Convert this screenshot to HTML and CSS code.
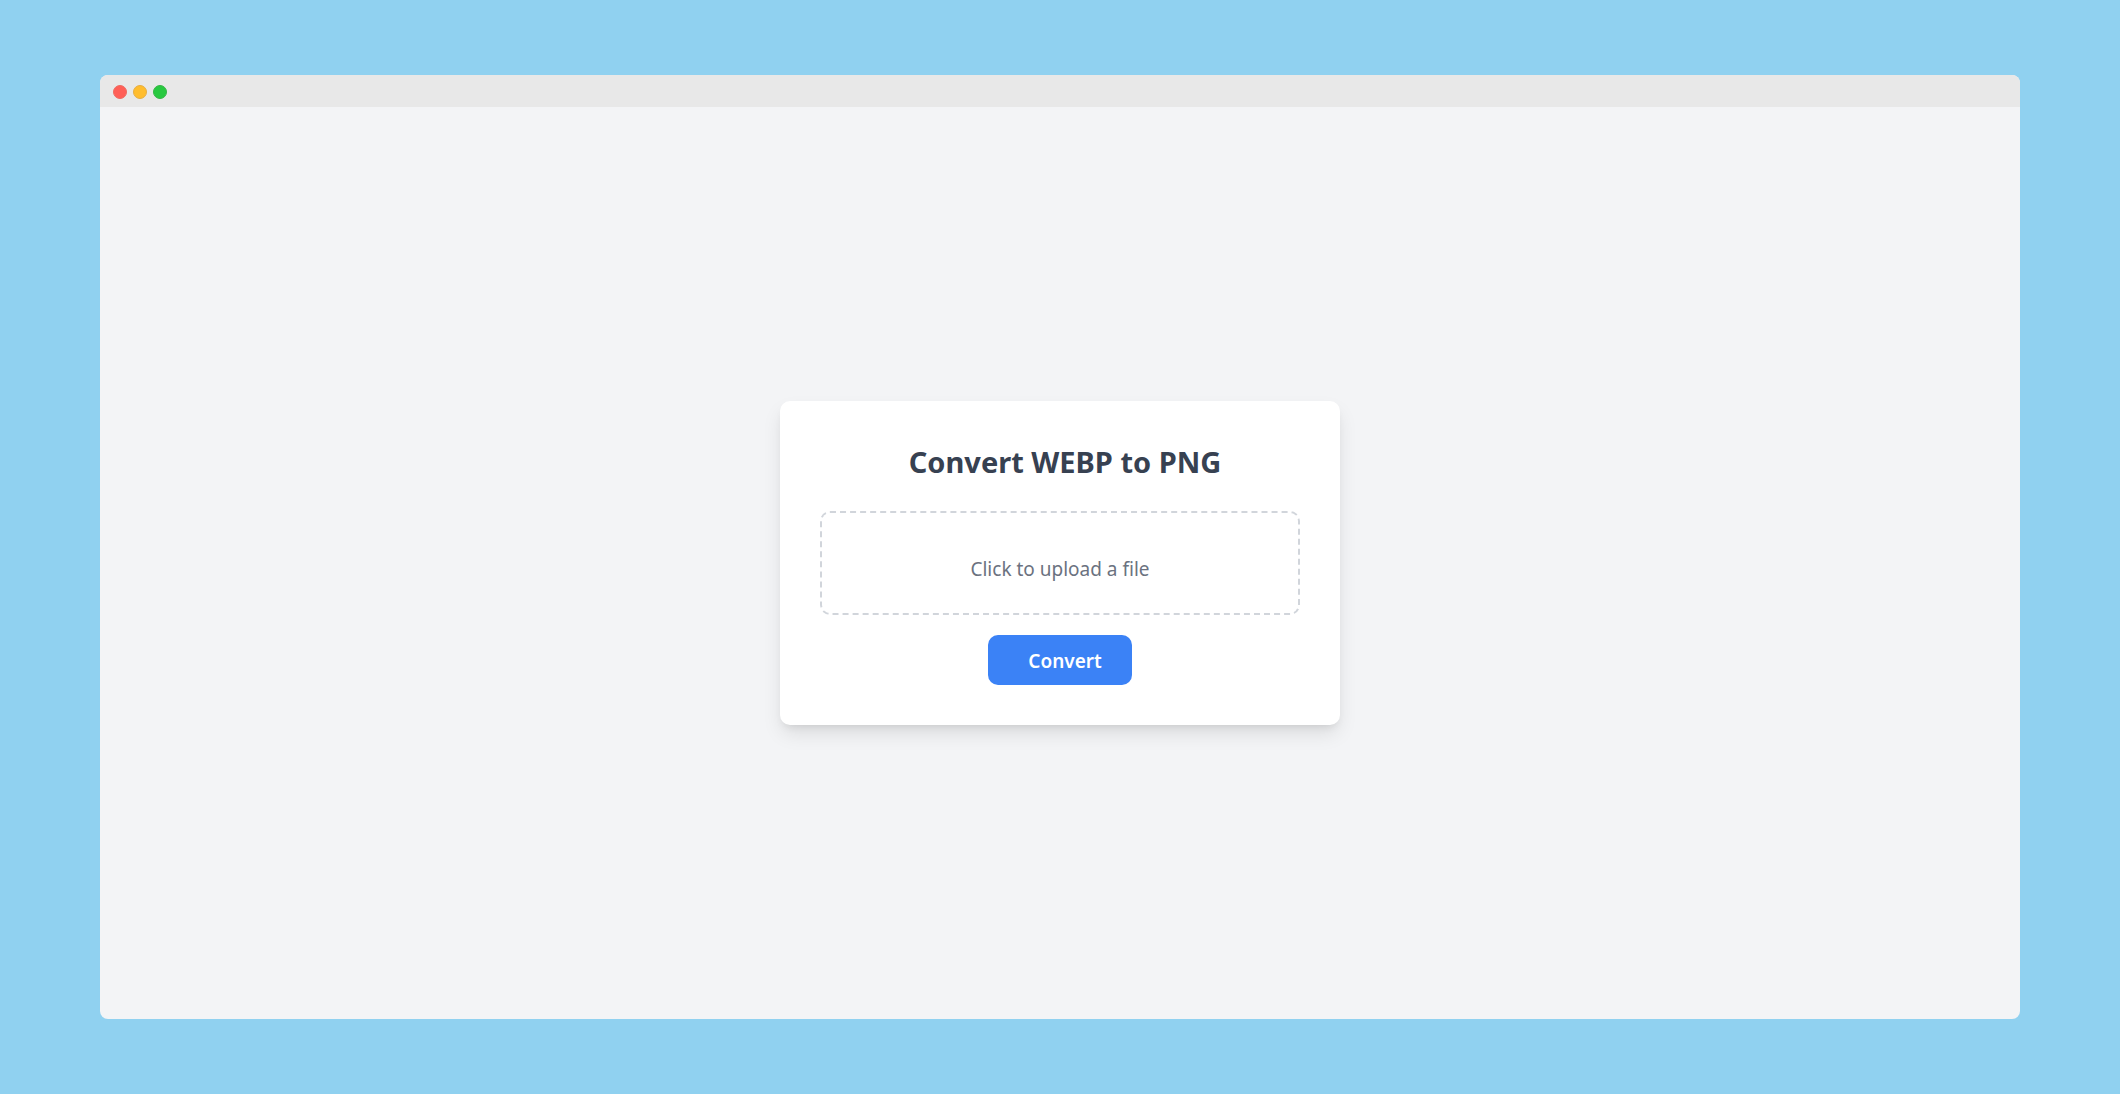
FILE: index.html
```html
<!DOCTYPE html>
<html lang="en">
<head>
<meta charset="utf-8">
<meta name="viewport" content="width=device-width, initial-scale=1">
<title>Convert WEBP to PNG</title>
<link rel="stylesheet" href="styles.css">
</head>
<body>
<div class="window">
  <header class="titlebar">
    <span class="dot dot-close"></span>
    <span class="dot dot-minimize"></span>
    <span class="dot dot-zoom"></span>
  </header>
  <main class="content">
    <form class="card">
      <h1 class="title">Convert WEBP to PNG</h1>
      <label class="dropzone" for="file">
        <span class="dropzone-text">Click to upload a file</span>
        <input class="file-input" type="file" id="file" accept="image/webp">
      </label>
      <button class="convert" type="button">Convert</button>
    </form>
  </main>
</div>
</body>
</html>
```
FILE: styles.css
```css
* {
  box-sizing: border-box;
}

body {
  margin: 0;
  min-height: 100vh;
  display: flex;
  padding: 75px 100px;
  background: #90d1f0;
  font-family: "Segoe UI", "Noto Sans", "Open Sans", sans-serif;
  font-size: 19px;
  line-height: 32px;
}

.window {
  flex: 1;
  display: flex;
  flex-direction: column;
  border-radius: 8px;
  overflow: hidden;
  background: #f3f4f6;
}

.titlebar {
  display: flex;
  align-items: center;
  gap: 6px;
  height: 32px;
  padding: 2px 13px 0;
  background: #e8e8e8;
}

.dot {
  width: 14px;
  height: 14px;
  border: 1px solid;
  border-radius: 50%;
}

.dot-close {
  background: #ff5f57;
  border-color: #ee6a60;
}

.dot-minimize {
  background: #ffbd2e;
  border-color: #e6ae42;
}

.dot-zoom {
  background: #28c940;
  border-color: #35b545;
}

.content {
  flex: 1;
  display: flex;
  align-items: center;
  justify-content: center;
}

.card {
  display: flex;
  flex-direction: column;
  align-items: center;
  width: 100%;
  max-width: 560px;
  padding: 40px;
  border-radius: 10px;
  background: #fff;
  box-shadow: 0 10px 20px -2px rgba(0, 0, 0, 0.1), 0 5px 8px -4px rgba(0, 0, 0, 0.1);
}

.title {
  margin: 0 0 28px;
  padding-left: 10px;
  color: #374151;
  font-size: 29px;
  font-weight: 700;
  line-height: 42px;
}

.dropzone {
  width: 100%;
  padding: 40px 30px 28px;
  border: 2px dashed #d1d5db;
  border-radius: 10px;
  color: #6b7280;
  text-align: center;
  cursor: pointer;
}

.dropzone-text {
  display: block;
}

.file-input {
  display: none;
}

.convert {
  margin-top: 20px;
  padding: 10px 30px 8px 40px;
  border: 0;
  border-radius: 10px;
  background: #3b82f6;
  color: #fff;
  font: inherit;
  font-weight: 600;
  cursor: pointer;
}
```
